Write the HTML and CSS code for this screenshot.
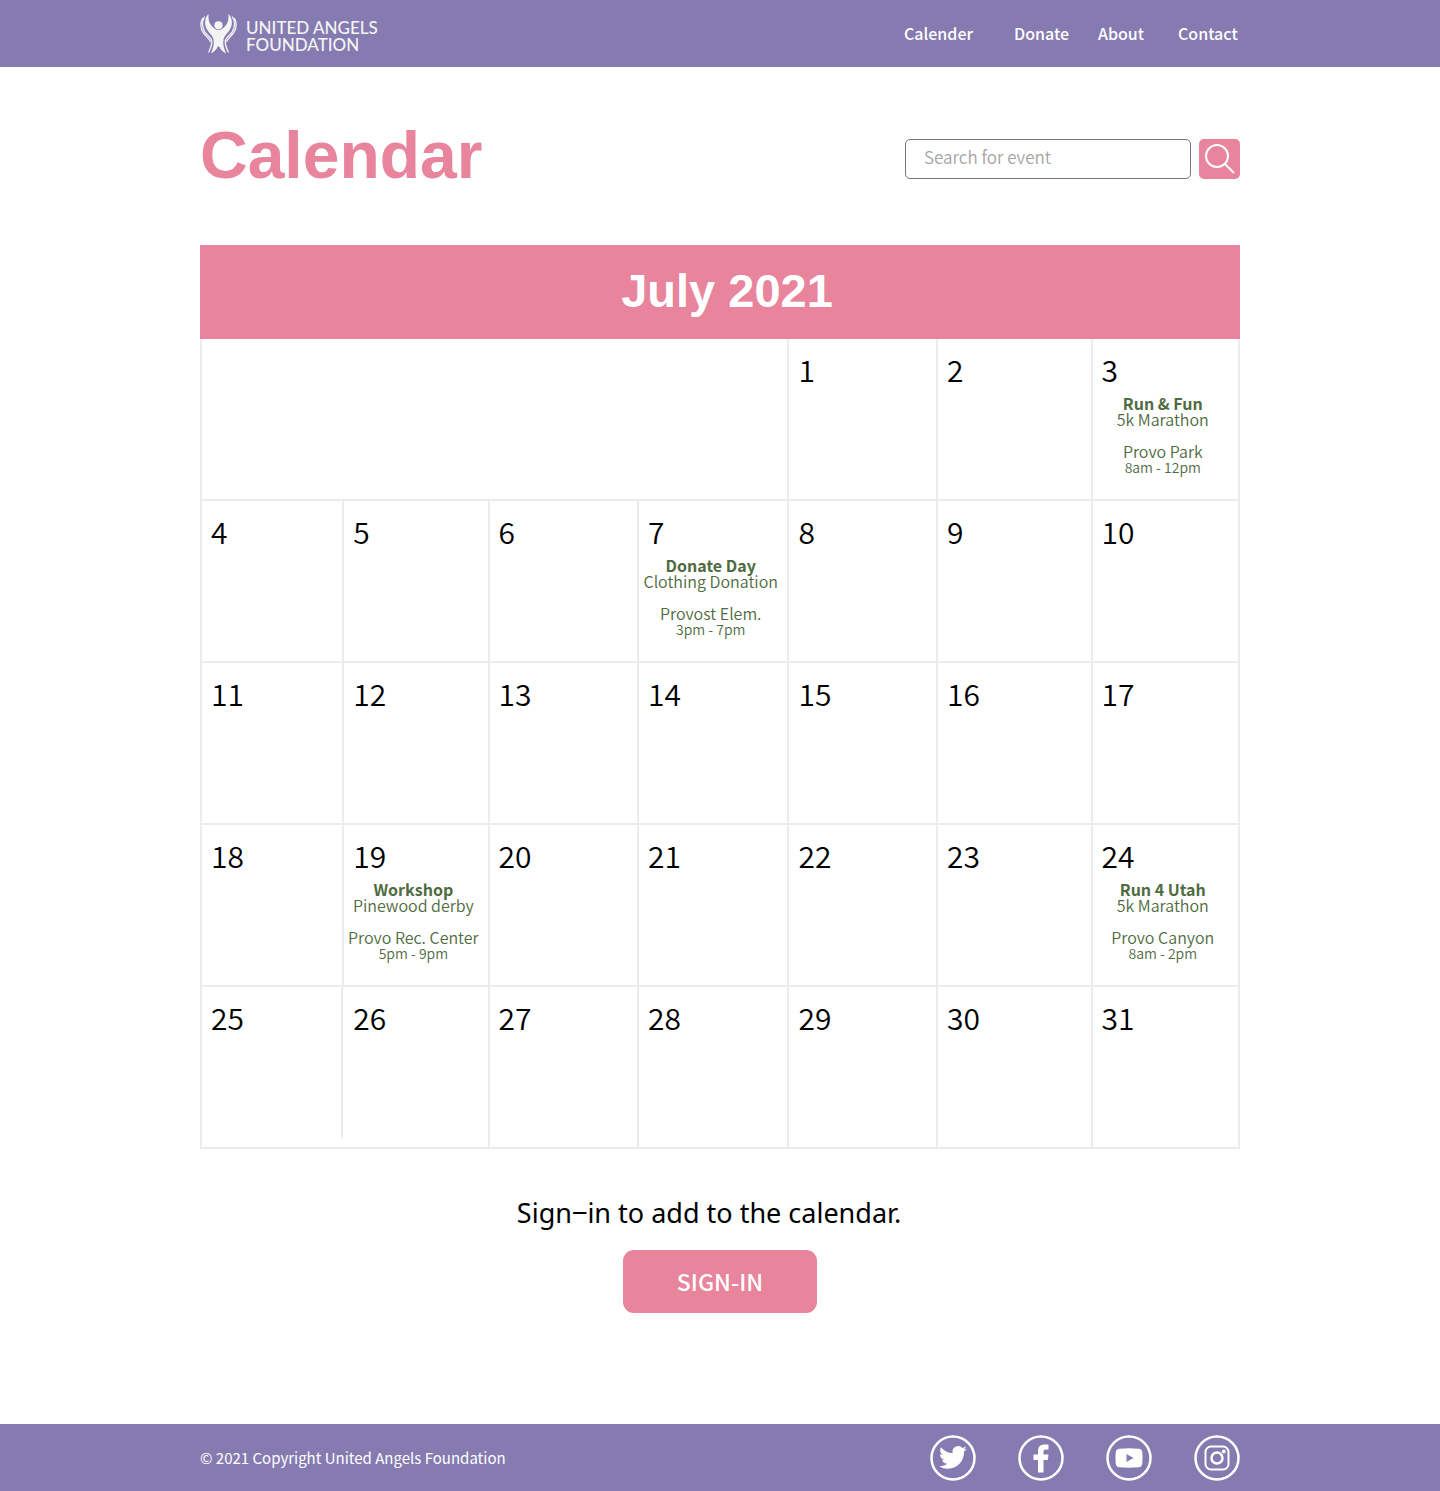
FILE: index.html
```html
<!DOCTYPE html>
<html lang="en">
<head>
<meta charset="utf-8">
<meta name="viewport" content="width=device-width, initial-scale=1">
<title>Calendar | United Angels Foundation</title>
<link rel="stylesheet" href="styles.css">
</head>
<body>
<header class="bar">
  <div class="wrap bar-inner">
    <a class="logo" href="#">
      <svg class="logo-mark" viewBox="0 0 37 42" aria-hidden="true">
        <circle cx="18.500" cy="12.300" r="4.100" fill="currentColor"/>
        <path fill="currentColor" d="M8.500 1C4.500 5 4.300 11 6.500 15.500c2.200 4.500 6 6.500 7 11 1 4.500-.5 9-2.500 14 3-1.500 5.500-4 6.800-7h1.400c1.300 3 3.800 5.500 6.800 7-2-5-3.500-9.500-2.500-14 1-4.500 4.800-6.500 7-11 2.200-4.500 2-10.500-2-14.500.3 5-.5 8.800-3 11.800-1.800 2.200-4 4.400-7 4.400s-5.200-2.200-7-4.400C9 9.800 8.200 6 8.500 1z"/>
        <path fill="none" stroke="currentColor" stroke-width="1.300" stroke-linecap="round" d="M4.500 4C1.500 9 2.200 14.500 5 19c2.500 3.800 6.500 5.500 6.800 9.500.2 4-1.600 7-3 10.500M2.500 5.500C-.3 11 1 16.500 4 20.500c2.500 3.500 5.700 5 6.200 8M32.500 4c3 5 2.300 10.500-.5 15-2.500 3.800-6.500 5.500-6.800 9.500-.2 4 1.600 7 3 10.500M34.500 5.500c2.800 5.500 1.500 11-1.500 15-2.500 3.500-5.700 5-6.200 8"/>
      </svg>
      <span class="logo-text">UNITED ANGELS<br>FOUNDATION</span>
    </a>
    <nav class="nav" aria-label="Main">
      <a href="#">Calender</a>
      <a href="#">Donate</a>
      <a href="#">About</a>
      <a href="#">Contact</a>
    </nav>
  </div>
</header>

<main class="wrap main">
  <div class="title-row">
    <h1>Calendar</h1>
    <form class="search" role="search">
      <input type="search" placeholder="Search for event" aria-label="Search for event">
      <button type="submit" aria-label="Search">
        <svg viewBox="0 0 41 40" aria-hidden="true"><g fill="none" stroke="currentColor" stroke-width="2"><circle cx="18" cy="17" r="11"/><path d="M26 25l9 9"/></g></svg>
      </button>
    </form>
  </div>

  <table class="calendar">
    <caption>July 2021</caption>
    <colgroup><col class="c1"><col class="c2"><col class="c3"><col class="c4"><col class="c5"><col class="c6"><col class="c7"></colgroup>
    <tbody>
      <tr>
        <td colspan="4"></td>
        <td><span class="day">1</span></td>
        <td><span class="day">2</span></td>
        <td><span class="day">3</span>
          <div class="event"><b>Run &amp; Fun</b><span>5k Marathon</span><span class="place">Provo Park</span><small>8am - 12pm</small></div></td>
      </tr>
      <tr>
        <td><span class="day">4</span></td>
        <td><span class="day">5</span></td>
        <td><span class="day">6</span></td>
        <td><span class="day">7</span>
          <div class="event"><b>Donate Day</b><span>Clothing Donation</span><span class="place">Provost Elem.</span><small>3pm - 7pm</small></div></td>
        <td><span class="day">8</span></td>
        <td><span class="day">9</span></td>
        <td><span class="day">10</span></td>
      </tr>
      <tr>
        <td><span class="day">11</span></td>
        <td><span class="day">12</span></td>
        <td><span class="day">13</span></td>
        <td><span class="day">14</span></td>
        <td><span class="day">15</span></td>
        <td><span class="day">16</span></td>
        <td><span class="day">17</span></td>
      </tr>
      <tr>
        <td><span class="day">18</span></td>
        <td><span class="day">19</span>
          <div class="event"><b>Workshop</b><span>Pinewood derby</span><span class="place">Provo Rec. Center</span><small>5pm - 9pm</small></div></td>
        <td><span class="day">20</span></td>
        <td><span class="day">21</span></td>
        <td><span class="day">22</span></td>
        <td><span class="day">23</span></td>
        <td><span class="day">24</span>
          <div class="event"><b>Run 4 Utah</b><span>5k Marathon</span><span class="place">Provo Canyon</span><small>8am - 2pm</small></div></td>
      </tr>
      <tr>
        <td class="short-rule"><span class="day">25</span></td>
        <td class="open-left"><span class="day">26</span></td>
        <td><span class="day">27</span></td>
        <td><span class="day">28</span></td>
        <td><span class="day">29</span></td>
        <td><span class="day">30</span></td>
        <td><span class="day">31</span></td>
      </tr>
    </tbody>
  </table>

  <section class="signin">
    <p>Sign‒in to add to the calendar.</p>
    <button type="button">SIGN-IN</button>
  </section>
</main>

<footer class="bar">
  <div class="wrap bar-inner">
    <p class="copyright">© 2021 Copyright United Angels Foundation</p>
    <div class="social">
      <a href="#" aria-label="Twitter"><svg viewBox="0 0 46 46"><circle class="ring" cx="23" cy="23" r="21.500"/><path transform="translate(9 8.500) scale(1.160)" fill="currentColor" d="M23.950 4.570a10 10 0 0 1-2.820.770 4.960 4.960 0 0 0 2.160-2.720c-.950.550-2 .950-3.130 1.180a4.920 4.920 0 0 0-8.380 4.480C7.690 8.100 4.070 6.130 1.640 3.160a4.920 4.920 0 0 0 1.520 6.570 4.900 4.900 0 0 1-2.230-.620v.060a4.920 4.920 0 0 0 3.950 4.830 5 5 0 0 1-2.210.080 4.940 4.940 0 0 0 4.600 3.420A9.870 9.870 0 0 1 0 19.540a14 14 0 0 0 7.550 2.210c9.050 0 14-7.500 14-13.980 0-.210 0-.420-.020-.630a9.940 9.940 0 0 0 2.420-2.570z"/></svg></a>
      <a href="#" aria-label="Facebook"><svg viewBox="0 0 46 46"><circle class="ring" cx="23" cy="23" r="21.500"/><path fill="currentColor" d="M20 37.500V25h-4.500v-5.500H20V16c0-4.500 2.700-6.500 6.500-6.500 1.500 0 3 .1 4 .3v4.700h-2.700c-1.800 0-2.300.9-2.300 2.300v2.700h5l-.7 5.500h-4.300v12.500z"/></svg></a>
      <a href="#" aria-label="YouTube"><svg viewBox="0 0 46 46"><circle class="ring" cx="23" cy="23" r="21.500"/><path fill="currentColor" fill-rule="evenodd" d="M13.500 13.700q9.500-.8 19 0 3.500.3 3.800 3.800.5 5.500 0 11-.3 3.500-3.800 3.800-9.500.8-19 0-3.500-.3-3.800-3.800-.5-5.500 0-11 .3-3.500 3.800-3.800zM20.500 19v8l7-4z"/></svg></a>
      <a href="#" aria-label="Instagram"><svg viewBox="0 0 46 46"><circle class="ring" cx="23" cy="23" r="21.500"/><g fill="none" stroke="currentColor" stroke-width="2"><rect x="11.500" y="11.500" width="23" height="23" rx="5.500"/><circle cx="23" cy="23" r="5.500" stroke-width="2.500"/></g><circle cx="29.800" cy="16.500" r="1.900" fill="currentColor"/></svg></a>
    </div>
  </div>
</footer>
</body>
</html>
```
FILE: styles.css
```css
* { box-sizing: border-box; }

body {
  margin: 0;
  min-height: 100vh;
  display: flex;
  flex-direction: column;
  background: #fff;
  color: #000;
  font-family: "Noto Sans CJK SC", "Noto Sans", sans-serif;
}

a { color: inherit; text-decoration: none; }
button { border: 0; padding: 0; cursor: pointer; font-family: inherit; color: #fff; background: #e8849c; }
svg { display: block; }

.wrap {
  width: 100%;
  max-width: 1080px;
  margin: 0 auto;
  padding: 0 20px;
}

.bar { background: #857bb0; color: #fff; }

.bar-inner {
  display: flex;
  align-items: center;
  justify-content: space-between;
  min-height: 67px;
}

.logo { display: flex; align-items: center; gap: 9px; color: #f4f4f4; }
.logo-mark { width: 37px; height: 42px; }
.logo-text { font: 500 17px/17px Lato, sans-serif; padding-top: 4px; }

.nav {
  display: grid;
  grid-template-columns: 110px 84px 80px 62px;
  padding-bottom: 2px;
  font-size: 16px;
  line-height: 24px;
  font-weight: 500;
}

.main { flex: 1; }

.title-row {
  display: flex;
  justify-content: space-between;
  align-items: center;
  padding: 62px 0 56px;
}

h1 {
  margin: 0;
  padding-bottom: 8px;
  font: bold 66px/52px "Liberation Sans", Arial, sans-serif;
  color: #e8849c;
}

.search { display: flex; gap: 8px; }

.search input {
  width: 286px;
  height: 40px;
  padding: 0 18px 6px;
  border: 1px solid #777;
  border-radius: 5px;
  font: 350 17px/24px "Noto Sans CJK SC", sans-serif;
  appearance: none;
}

.search input::placeholder { color: #a5a5a5; }
.search button { width: 41px; height: 40px; border-radius: 5px; }

.calendar {
  width: 100%;
  table-layout: fixed;
  border-collapse: collapse;
}

.calendar caption {
  background: #e8849c;
  color: #fff;
  font: bold 47px/92px "Liberation Sans", Arial, sans-serif;
  padding: 0 0 2px 14px;
}

.c1 { width: 13.700%; }
.c2 { width: 14%; }
.c3 { width: 14.400%; }
.c4 { width: 14.500%; }
.c5 { width: 14.300%; }
.c6 { width: 14.900%; }
.c7 { width: 14.200%; }

.calendar td {
  height: 162px;
  padding: 10px 9px 0;
  vertical-align: top;
  border: 2px solid #ececec;
}

.calendar tr:first-child td { height: 161px; border-top: 0; }

/* the rule between the 25th and 26th stops short of the bottom edge */
.calendar .open-left { border-left: 0; padding-left: 10px; }
.calendar .short-rule {
  border-right: 0;
  background: linear-gradient(#ececec, #ececec) no-repeat right top / 2px calc(100% - 9px);
}

.day { display: block; font-size: 30px; line-height: 40px; font-weight: 350; }

.event {
  display: flex;
  flex-direction: column;
  align-items: center;
  margin: 6px -4px 0 -9px;
  color: #4f6b41;
  font-size: 16px;
  font-weight: 350;
  line-height: 16px;
  white-space: nowrap;
}

.event b { font-size: 16px; font-weight: 700; }
.event .place { margin-top: 16px; }
.event small { font-size: 14px; }

.signin { text-align: center; padding: 44px 0 111px; }
.signin p { margin: 0 0 17px; padding-right: 22px; font: 27px/40px "Noto Sans", sans-serif; }

.signin button {
  width: 194px;
  height: 63px;
  padding-bottom: 2px;
  border-radius: 11px;
  font-size: 23px;
  font-weight: 500;
}

.copyright { margin: 0; font-size: 15px; line-height: 24px; font-weight: 400; }
.social { display: flex; gap: 42px; }
.social svg { width: 46px; height: 46px; }
.ring { fill: none; stroke: currentColor; stroke-width: 2.500px; }

@media (max-width: 800px) {
  .bar-inner, .title-row { flex-wrap: wrap; gap: 16px; }
}
```
